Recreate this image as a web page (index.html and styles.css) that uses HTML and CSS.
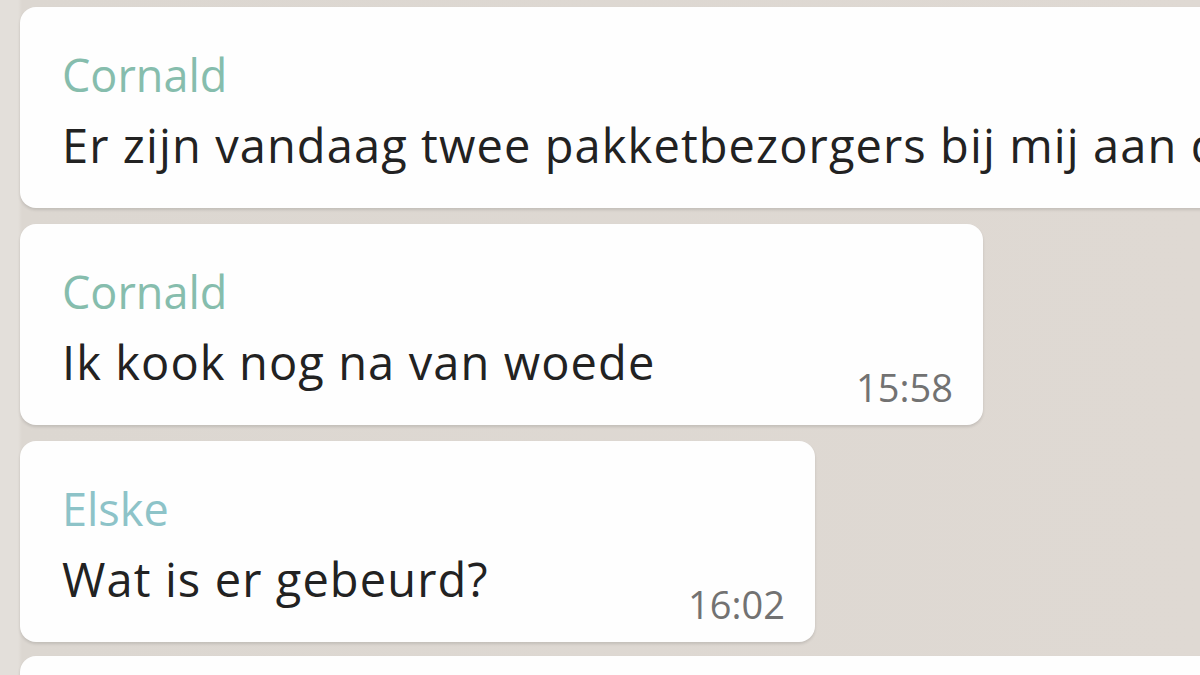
FILE: index.html
```html
<!DOCTYPE html>
<html lang="nl">
<head>
<meta charset="utf-8">
<title>Chat</title>
<link rel="stylesheet" href="styles.css">
</head>
<body>
<div class="chat">
  <div class="bubble bubble-wide">
    <div class="name name-cornald">Cornald</div>
    <div class="row">
      <div class="msg">Er zijn vandaag twee pakketbezorgers bij mij aan de deur geweest</div>
      <div class="time">15:57</div>
    </div>
  </div>
  <div class="bubble bubble-mid">
    <div class="name name-cornald">Cornald</div>
    <div class="row">
      <div class="msg">Ik kook nog na van woede</div>
      <div class="time">15:58</div>
    </div>
  </div>
  <div class="bubble bubble-short">
    <div class="name name-elske">Elske</div>
    <div class="row">
      <div class="msg">Wat is er gebeurd?</div>
      <div class="time">16:02</div>
    </div>
  </div>
  <div class="bubble bubble-wide bubble-next"></div>
</div>
</body>
</html>
```
FILE: styles.css
```css
html, body {
  margin: 0;
  padding: 0;
  width: 1200px;
  height: 675px;
  overflow: hidden;
}
body {
  background: linear-gradient(90deg, #e3dfda 0, #e3dfda 18px, #dcd7d1 22px, #dfd9d3 100%);
  font-family: "Open Sans", "Noto Sans", sans-serif;
}
.chat {
  display: flex;
  flex-direction: column;
  align-items: flex-start;
  gap: 16px;
  padding: 7px 0 0 20px;
}
.bubble {
  box-sizing: border-box;
  background: #fefefe;
  border-radius: 16px;
  box-shadow: 0 2px 3px rgba(0, 0, 0, 0.12);
  padding: 40px 30px 15px 42px;
  flex-shrink: 0;
}
.bubble-wide { width: 1500px; }
.bubble-mid { width: 963px; }
.bubble-short { width: 795px; }
.bubble-next { height: 60px; margin-top: -2px; }
.name {
  font-size: 45px;
  line-height: 56px;
  white-space: nowrap;
}
.name-cornald { color: #86bdad; }
.name-elske { color: #8dc3c8; }
.row {
  display: flex;
  align-items: flex-end;
  margin-top: 12px;
}
.msg {
  font-size: 47px;
  line-height: 60px;
  letter-spacing: 1.1px;
  color: #222;
  white-space: nowrap;
  margin-bottom: 18px;
}
.time {
  margin-left: auto;
  padding-left: 20px;
  font-size: 38px;
  line-height: 40px;
  color: #727272;
  margin-bottom: 3px;
  white-space: nowrap;
}
```
